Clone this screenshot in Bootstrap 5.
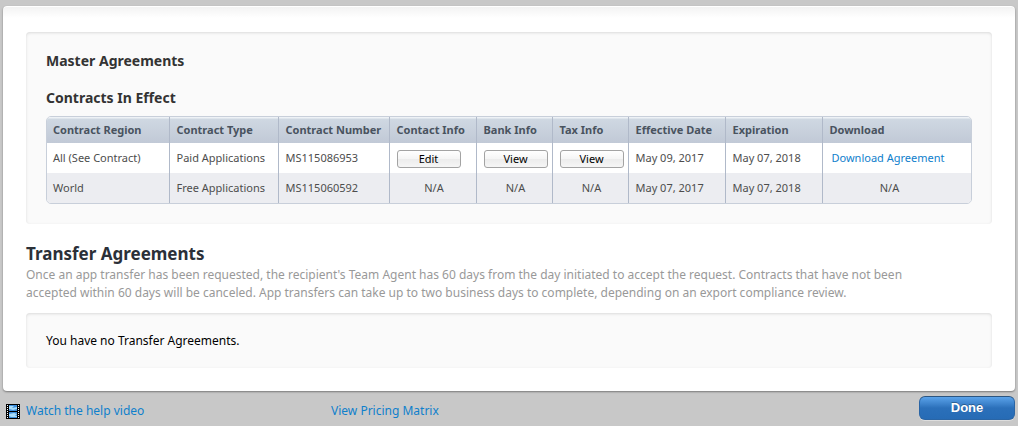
<!DOCTYPE html>
<html lang="en">
<head>
<meta charset="utf-8">
<meta name="viewport" content="width=device-width, initial-scale=1">
<title>Agreements</title>
<link href="https://cdn.jsdelivr.net/npm/bootstrap@5.3.0/dist/css/bootstrap.min.css" rel="stylesheet">
<style>
body { background: #c8c8c8; font: 12px/18px "Noto Sans", "Open Sans", sans-serif; color: #000; }
a { color: #0f80cc; text-decoration: none; }
a:hover { text-decoration: underline; }
.page { padding: 6px 3px; }
.sheet { padding: 26px 23px 23px; border-radius: 4px; background: #fff linear-gradient(#f2f2f2, #fff 12px) no-repeat; box-shadow: inset 0 1px #fff, 0 1px 2px rgba(0,0,0,.4); }
.well { padding: 20px; border-radius: 4px; background: #fafafa; box-shadow: inset 0 1px 3px rgba(0,0,0,.13); }
.well p { line-height: 15px; }
.well h2 { font-size: 14px; line-height: 18px; font-weight: 700; color: #333; }
.well .region-title { margin: 19px 0 9px; }
h1 { margin: 18px 0 0; font-size: 17px; line-height: 24px; font-weight: 700; color: #2b3038; }
.intro { margin-bottom: 11px; padding-right: 48px; color: #999; }
.frame { border: 1px solid #c8cfda; border-radius: 5px; overflow: hidden; }
.contracts { width: 100%; table-layout: fixed; font-size: 11px; line-height: 16px; color: #4d4d4d; white-space: nowrap; }
.contracts th, .contracts td { padding: 0 4px 0 7px; border-left: 1px solid #b0b9c9; }
.contracts th:first-child, .contracts td:first-child { padding-left: 6px; border-left: 0; }
.contracts thead th { height: 26px; color: #49535f; }
.contracts thead { background: linear-gradient(#eef2f6 1px, #cfd8e2 2px, #c1c9d6); }
.contracts td { height: 30px; }
.contracts tbody tr { background: #fff; }
.contracts tbody tr:nth-child(even) { background: #ecedf1; }
.c-region { width: 122px; } .c-type { width: 109px; } .c-number { width: 111px; }
.c-contact { width: 87px; } .c-info { width: 76px; } .c-date { width: 97px; }
.contracts .download { padding-left: 9px; }
.download span { display: inline-block; width: 116px; text-align: center; }
.btn-cell { display: block; width: 64px; height: 18px; margin-top: 2px; padding: 0; border: 1px solid #a3a3a3; border-radius: 3px; background: linear-gradient(#fff, #f5f5f5 50%, #ececec 50%, #f6f6f6); font-size: 11px; line-height: 16px; color: #000; }
.page footer { padding-top: 5px; }
.btn-done { width: 96px; height: 24px; padding: 0; border: 1px solid #2a65a5; border-top-color: #2c5580; border-radius: 6px; background: linear-gradient(#5ba3ea, #2b70ba 50%, #266bb5); box-shadow: 0 1px #dedede; color: #fff; font: bold 13px/20px "Liberation Sans", Arial, sans-serif; text-shadow: 0 -1px rgba(0,0,0,.3); }
.help { width: 328px; padding-left: 3px; gap: 6px; }
</style>
</head>
<body>
<div class="page">
  <main class="sheet">
    <section class="well">
      <h2 class="mb-0">Master Agreements</h2>
      <h2 class="region-title">Contracts In Effect</h2>
      <div class="frame">
        <table class="contracts">
          <colgroup>
            <col class="c-region"><col class="c-type"><col class="c-number"><col class="c-contact"><col class="c-info"><col class="c-info"><col class="c-date"><col class="c-date"><col>
          </colgroup>
          <thead>
            <tr><th>Contract Region</th><th>Contract Type</th><th>Contract Number</th><th>Contact Info</th><th>Bank Info</th><th>Tax Info</th><th>Effective Date</th><th>Expiration</th><th>Download</th></tr>
          </thead>
          <tbody>
            <tr>
              <td>All (See Contract)</td><td>Paid Applications</td><td>MS115086953</td>
              <td><button type="button" class="btn btn-cell">Edit</button></td>
              <td><button type="button" class="btn btn-cell">View</button></td>
              <td><button type="button" class="btn btn-cell">View</button></td>
              <td>May 09, 2017</td><td>May 07, 2018</td>
              <td class="download"><a href="#">Download Agreement</a></td>
            </tr>
            <tr>
              <td>World</td><td>Free Applications</td><td>MS115060592</td>
              <td class="text-center">N/A</td><td class="text-center">N/A</td><td class="text-center">N/A</td>
              <td>May 07, 2017</td><td>May 07, 2018</td>
              <td class="download"><span>N/A</span></td>
            </tr>
          </tbody>
        </table>
      </div>
    </section>
    <h1>Transfer Agreements</h1>
    <p class="intro">Once an app transfer has been requested, the recipient's Team Agent has 60 days from the day initiated to accept the request. Contracts that have not been accepted within 60 days will be canceled. App transfers can take up to two business days to complete, depending on an export compliance review.</p>
    <section class="well"><p class="mb-0">You have no Transfer Agreements.</p></section>
  </main>
  <footer class="d-flex align-items-end">
    <div class="help d-flex align-items-center">
      <svg width="14" height="15" viewBox="0 0 14 15" aria-hidden="true">
        <path fill="#000" d="M0 0h14v15H0z"/>
        <path fill="#3b8ddb" d="M3 1h8v6H3zM3 8h8v6H3z"/>
        <path fill="#a8dcfa" d="M3 2h5L6 4l5-1v2L7 6 3 5zM3 10l5-1 3 1-2 2h2v1H5l-2-1z"/>
        <path stroke="#fff" stroke-dasharray="1 1" d="M1.500 1v13M12.500 1v13"/>
      </svg>
      <a href="#">Watch the help video</a>
    </div>
    <a class="flex-fill" href="#">View Pricing Matrix</a>
    <button type="button" class="btn btn-done">Done</button>
  </footer>
</div>
<script src="https://cdn.jsdelivr.net/npm/bootstrap@5.3.0/dist/js/bootstrap.bundle.min.js"></script>
</body>
</html>
